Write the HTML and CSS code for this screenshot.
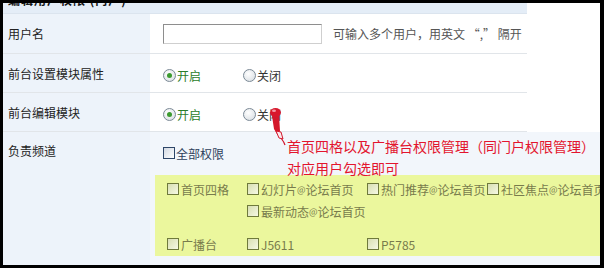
FILE: index.html
```html
<!DOCTYPE html>
<html>
	<head>
		<meta charset="utf-8">
		<title>用户权限设置</title>
		<link rel="stylesheet" href="styles.css">
	</head>
	<body>
		<div class="frame">
			<div class="form">
				<div class="head"><span>编辑用户权限 (门户)</span></div>
				<div class="row row-user">
					<div class="lbl">用户名</div>
					<div class="val">
						<input type="text" class="txt" name="uname">
						<span class="hint">可输入多个用户，用英文 “,” 隔开</span>
					</div>
				</div>
				<div class="row">
					<div class="lbl">前台设置模块属性</div>
					<div class="val val-opt">
						<span class="opt"><i class="radio on"></i><span class="opt-on">开启</span></span>
						<span class="opt"><i class="radio"></i>关闭</span>
					</div>
				</div>
				<div class="row">
					<div class="lbl">前台编辑模块</div>
					<div class="val val-opt">
						<span class="opt"><i class="radio on"></i><span class="opt-on">开启</span></span>
						<span class="opt"><i class="radio"></i>关闭</span>
					</div>
				</div>
			</div>
			<div class="row-wide">
				<div class="lbl lbl-top">负责频道</div>
				<div class="val-wide">
					<div class="all"><i class="cb cb-all"></i>全部权限</div>
					<div class="yellow">
						<div class="grp">
							<div class="main"><span class="item"><i class="cb"></i>首页四格</span></div>
							<div class="sub">
								<span class="item"><i class="cb"></i>幻灯片<span class="at">@</span>论坛首页</span>
								<span class="item"><i class="cb"></i>热门推荐<span class="at">@</span>论坛首页</span>
								<span class="item"><i class="cb"></i>社区焦点<span class="at">@</span>论坛首页</span>
								<span class="item"><i class="cb"></i>最新动态<span class="at">@</span>论坛首页</span>
							</div>
						</div>
						<div class="grp">
							<div class="main"><span class="item"><i class="cb"></i>广播台</span></div>
							<div class="sub">
								<span class="item"><i class="cb"></i>J5611</span>
								<span class="item"><i class="cb"></i>P5785</span>
							</div>
						</div>
					</div>
				</div>
			</div>
			<div class="note">首页四格以及广播台权限管理（同门户权限管理）<br>对应用户勾选即可</div>
			<svg class="pin" width="28" height="42" viewBox="0 0 28 42">
				<path d="M19 34 Q22 38 23 41" fill="none" stroke="#d0142b" stroke-width="1.2"/>
				<path d="M10 12 L17 11 L18 27 L15 30 L12 25 Z" fill="#d3182b"/>
				<path d="M14 27 L19 28 L21 35 L17 34 Z" fill="#fbe9eb" stroke="#d3182b" stroke-width="1"/>
				<ellipse cx="13.5" cy="8.5" rx="5.5" ry="4.5" fill="#d8182c"/>
				<ellipse cx="12" cy="6.8" rx="2" ry="1.2" fill="#f39aa6"/>
			</svg>
		</div>
	</body>
</html>
```

FILE: styles.css
```css
html, body{
	margin: 0;
	padding: 0;
	background: #fff;
}
body{
	font-family: "Noto Sans CJK SC", "DejaVu Sans", sans-serif;
	font-size: 12px;
	color: #222;
}
.frame{
	position: relative;
	width: 597px;
	height: 262px;
	border: 3px solid #000;
	border-right-width: 4px;
	overflow: hidden;
	background: #fff;
}
.form{
	width: 524px;
}
.head{
	height: 10px;
	background: #e4edf7;
	border-bottom: 1px solid #dbe4ee;
	overflow: hidden;
}
.head span{
	display: block;
	margin-top: -10px;
	padding-left: 5px;
	line-height: 14px;
	font-weight: bold;
	color: #111;
	letter-spacing: 1px;
}
.row{
	display: flex;
	height: 38px;
	border-bottom: 1px solid #e1e5e9;
}
.row-user{
	height: 39px;
}
.lbl{
	flex: none;
	width: 142px;
	padding-left: 5px;
	background: #edf3fa;
	display: flex;
	align-items: center;
	color: #222;
}
.val{
	flex: 1;
	padding-left: 13px;
	display: flex;
	align-items: center;
}
.val-opt{
	padding-top: 5px;
}
.txt{
	box-sizing: border-box;
	width: 159px;
	height: 20px;
	margin: 0;
	padding: 0;
	border: 1px solid;
	border-color: #8e8e8e #cfcfcf #cfcfcf #8e8e8e;
	background: #fff;
}
.hint{
	margin-left: 11px;
	color: #555;
}
.opt{
	display: inline-flex;
	align-items: center;
	width: 80px;
	color: #333;
}
.opt-on{
	color: #2a7d2a;
}
.radio{
	position: relative;
	display: inline-block;
	width: 11px;
	height: 11px;
	margin-right: 1px;
	border: 1px solid #7b8996;
	border-radius: 50%;
	background: radial-gradient(circle at 40% 35%, #fff, #d4dadf);
}
.radio.on::after{
	content: "";
	position: absolute;
	left: 3px;
	top: 3px;
	width: 5px;
	height: 5px;
	border-radius: 50%;
	background: #3c9a30;
}
.row-wide{
	display: flex;
	height: 134px;
}
.lbl-top{
	align-items: flex-start;
	padding-top: 10px;
	box-sizing: content-box;
}
.val-wide{
	flex: 1;
	min-width: 0;
	background: #f2f6fb;
	padding-top: 13px;
}
.all{
	display: flex;
	align-items: center;
	height: 16px;
	padding-left: 13px;
	color: #2e3f5c;
}
.cb{
	display: inline-block;
	width: 10px;
	height: 10px;
	margin-right: 2px;
	border: 1px solid #6f7a3c;
	background: linear-gradient(135deg, #d8dfb2, #f6f9e4);
}
.cb-all{
	border-color: #2e4668;
	background: linear-gradient(135deg, #d3d9e2, #fff);
	margin-right: 1px;
}
.yellow{
	margin-top: 14px;
	margin-left: 5px;
	height: 81px;
	box-sizing: border-box;
	padding: 3px 0 0 12px;
	background: #ebf79d;
}
.grp{
	display: flex;
}
.grp + .grp{
	margin-top: 11px;
}
.main{
	width: 80px;
	flex: none;
}
.sub{
	display: grid;
	grid-template-columns: repeat(3, 120px);
	flex: none;
}
.item{
	display: flex;
	align-items: center;
	height: 22px;
	white-space: nowrap;
	color: #787b4c;
}
.at{
	font-size: 9px;
}
.note{
	position: absolute;
	left: 284px;
	top: 132px;
	color: #e3152e;
	font-size: 14px;
	line-height: 22px;
	white-space: nowrap;
}
.pin{
	position: absolute;
	left: 259px;
	top: 101px;
}
```
